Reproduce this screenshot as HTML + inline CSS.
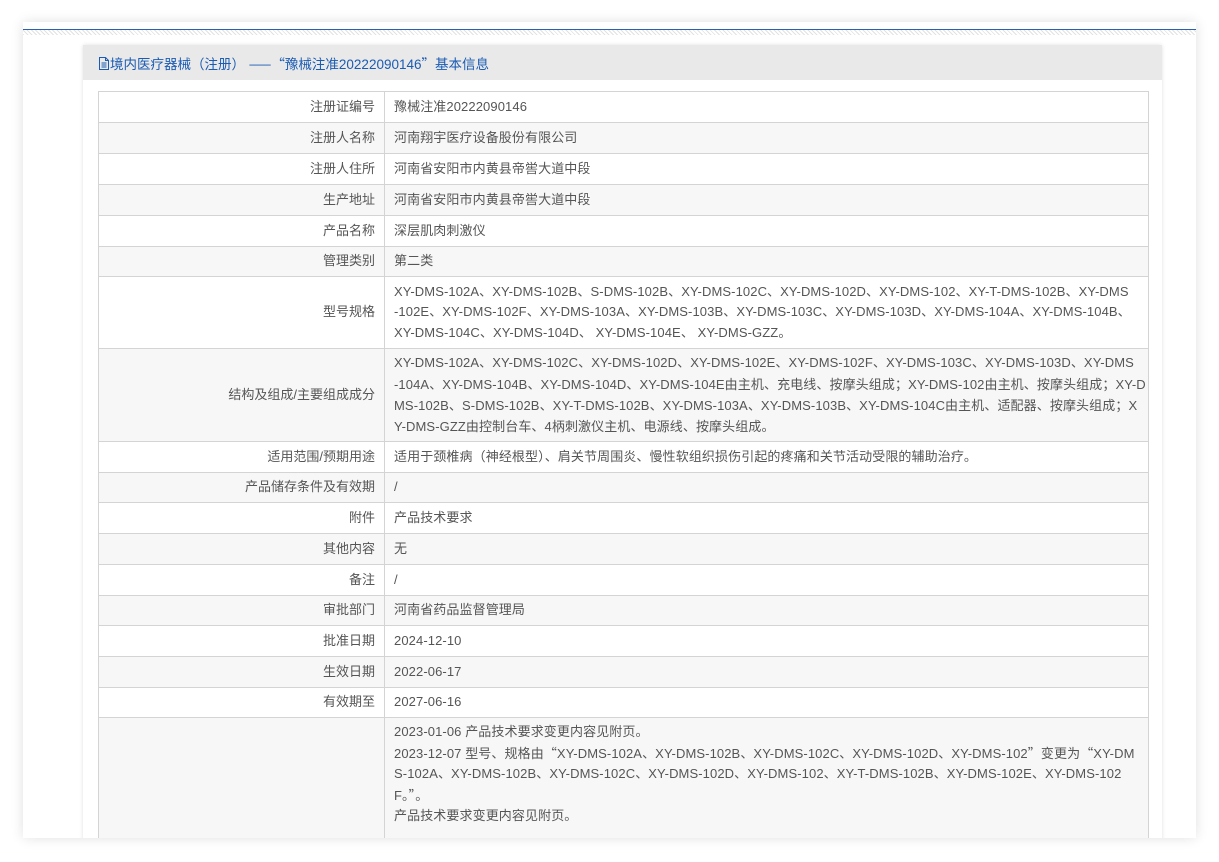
<!DOCTYPE html>
<html><head><meta charset="utf-8"><style>
html,body{margin:0;padding:0;background:#fff;width:1219px;height:862px;overflow:hidden;}
body{font-family:"Liberation Sans","Noto Sans CJK SC",sans-serif;font-size:13px;color:#555;}
.c{font-family:"Noto Sans CJK SC",sans-serif;}
.card{position:absolute;left:23px;top:22px;width:1173px;height:816px;background:#fff;box-shadow:0 0 12px rgba(0,0,0,0.12);overflow:hidden;}
.bline{position:absolute;left:0;top:7px;width:1173px;height:1px;background:#2a60b0;}
.hatch{position:absolute;left:0;top:8px;width:1173px;height:5px;background:repeating-linear-gradient(45deg,#e2e2e2 0 1px,#fff 1px 3px);}
.panel{position:absolute;left:60px;top:23px;width:1079px;height:800px;background:#fff;box-shadow:0 0 4px rgba(0,0,0,0.12);}
.ph{height:35px;background:#e9e9e9;color:#1a5bb4;font-size:13.5px;line-height:36px;padding-left:15px;}
table{position:absolute;left:15px;top:46px;width:1050px;border-collapse:collapse;table-layout:fixed;}
td{border:1px solid #d4d4d4;padding:0 9px;line-height:20.5px;white-space:nowrap;letter-spacing:0.1px;overflow:visible;}
td.l{text-align:right;letter-spacing:0;}
tr:nth-child(even) td{background:#f7f7f7;}
</style></head><body>
<div class="card"><div class="bline"></div><div class="hatch"></div>
<div class="panel"><div class="ph"><svg width="12" height="13" viewBox="0 0 12 13" style="vertical-align:-1px"><path d="M1.5 .5h6l3 3v9h-9z M7.5 .5v3h3 M3.5 6h5 M3.5 8h5 M3.5 10h5" fill="none" stroke="#1a5bb4" stroke-width="1"/></svg>境内医疗器械<span class="c">（</span>注册<span class="c">）</span> <span class="c">——“</span>豫械注准20222090146<span class="c">”</span>基本信息</div>
<table>
<colgroup><col style="width:286px"><col style="width:764px"></colgroup>
<tr style="height:31px"><td class="l">注册证编号</td><td>豫械注准20222090146</td></tr>
<tr style="height:31px"><td class="l">注册人名称</td><td>河南翔宇医疗设备股份有限公司</td></tr>
<tr style="height:31px"><td class="l">注册人住所</td><td>河南省安阳市内黄县帝喾大道中段</td></tr>
<tr style="height:31px"><td class="l">生产地址</td><td>河南省安阳市内黄县帝喾大道中段</td></tr>
<tr style="height:31px"><td class="l">产品名称</td><td>深层肌肉刺激仪</td></tr>
<tr style="height:30px"><td class="l">管理类别</td><td>第二类</td></tr>
<tr style="height:72px"><td class="l">型号规格</td><td>XY-DMS-102A、XY-DMS-102B、S-DMS-102B、XY-DMS-102C、XY-DMS-102D、XY-DMS-102、XY-T-DMS-102B、XY-DMS<br>-102E、XY-DMS-102F、XY-DMS-103A、XY-DMS-103B、XY-DMS-103C、XY-DMS-103D、XY-DMS-104A、XY-DMS-104B、<br>XY-DMS-104C、XY-DMS-104D、 XY-DMS-104E、 XY-DMS-GZZ。</td></tr>
<tr style="height:93px"><td class="l">结构及组成/主要组成成分</td><td>XY-DMS-102A、XY-DMS-102C、XY-DMS-102D、XY-DMS-102E、XY-DMS-102F、XY-DMS-103C、XY-DMS-103D、XY-DMS<br>-104A、XY-DMS-104B、XY-DMS-104D、XY-DMS-104E由主机、充电线、按摩头组成<span class="c">；</span>XY-DMS-102由主机、按摩头组成<span class="c">；</span>XY-D<br>MS-102B、S-DMS-102B、XY-T-DMS-102B、XY-DMS-103A、XY-DMS-103B、XY-DMS-104C由主机、适配器、按摩头组成<span class="c">；</span>X<br>Y-DMS-GZZ由控制台车、4柄刺激仪主机、电源线、按摩头组成。</td></tr>
<tr style="height:31px"><td class="l">适用范围/预期用途</td><td>适用于颈椎病<span class="c">（</span>神经根型<span class="c">）</span>、肩关节周围炎、慢性软组织损伤引起的疼痛和关节活动受限的辅助治疗。</td></tr>
<tr style="height:30px"><td class="l">产品储存条件及有效期</td><td>/</td></tr>
<tr style="height:31px"><td class="l">附件</td><td>产品技术要求</td></tr>
<tr style="height:31px"><td class="l">其他内容</td><td>无</td></tr>
<tr style="height:31px"><td class="l">备注</td><td>/</td></tr>
<tr style="height:30px"><td class="l">审批部门</td><td>河南省药品监督管理局</td></tr>
<tr style="height:31px"><td class="l">批准日期</td><td>2024-12-10</td></tr>
<tr style="height:31px"><td class="l">生效日期</td><td>2022-06-17</td></tr>
<tr style="height:30px"><td class="l">有效期至</td><td>2027-06-16</td></tr>
<tr style="height:140px"><td class="l"></td><td style="vertical-align:top;padding-top:4px">2023-01-06 产品技术要求变更内容见附页。<br>2023-12-07 型号、规格由<span class="c">“</span>XY-DMS-102A、XY-DMS-102B、XY-DMS-102C、XY-DMS-102D、XY-DMS-102<span class="c">”</span>变更为<span class="c">“</span>XY-DM<br>S-102A、XY-DMS-102B、XY-DMS-102C、XY-DMS-102D、XY-DMS-102、XY-T-DMS-102B、XY-DMS-102E、XY-DMS-102<br>F<span class="c">。”</span>。<br>产品技术要求变更内容见附页。</td></tr>
</table></div></div>
</body></html>
